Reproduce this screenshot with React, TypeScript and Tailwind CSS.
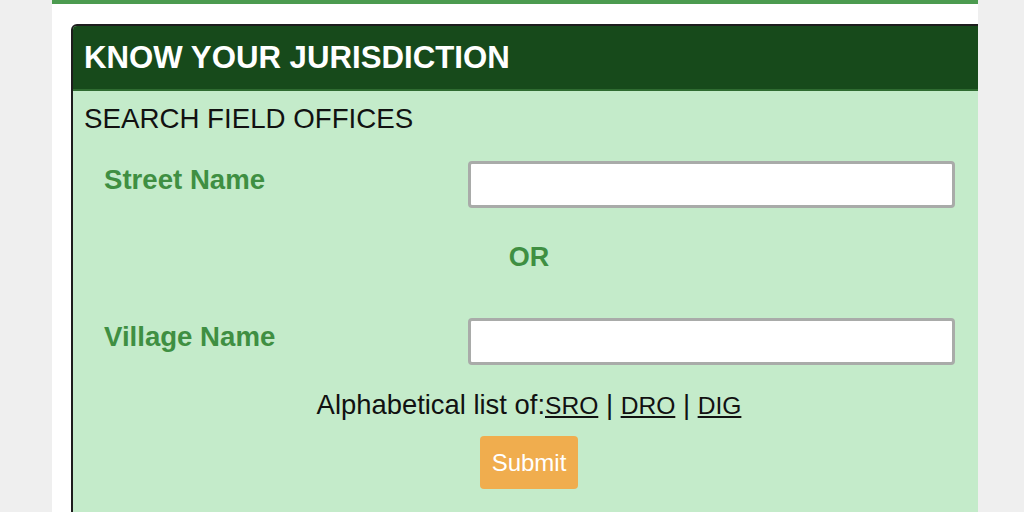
import React from 'react'

const sans = { fontFamily: '"Liberation Sans", Arial, sans-serif' }

function FieldRow({ label }: { label: string }) {
  return (
    <div className="flex items-start pl-[31px]">
      <label className="w-[364px] pt-[3px] text-[27.6px] leading-[31px] font-bold text-[#3f8f42]">{label}</label>
      <input
        type="text"
        className="w-[487px] h-[47px] bg-white border-[3px] border-[#a9aba9] rounded-[4px] outline-none"
      />
    </div>
  )
}

export default function App() {
  return (
    <div className="w-[1024px] h-[512px] bg-[#efefef] overflow-hidden" style={sans}>
      <div className="ml-[52px] w-[926px] h-[512px] bg-white overflow-hidden">
        <div className="h-[4px] bg-[#4c9b50]" />
        <div className="ml-[19px] mt-[20px] w-[916px] h-[600px] border-2 border-[#1d1d1d] rounded-tl-[6px] overflow-hidden bg-[#c4ebca]">
          <div className="h-[65px] bg-[#174a1b] border-b-2 border-[#2f6b31] flex items-center pl-[11px]">
            <h1 className="text-[31.2px] font-bold text-white leading-none">KNOW YOUR JURISDICTION</h1>
          </div>
          <div className="pt-[12px]">
            <p className="pl-[11px] text-[27.7px] leading-[32px] text-[#111]">SEARCH FIELD OFFICES</p>
            <div className="mt-[26px]">
              <FieldRow label="Street Name" />
            </div>
            <p className="mt-[34px] text-center text-[27px] leading-[31px] font-bold text-[#3f8f42]">OR</p>
            <div className="mt-[45px]">
              <FieldRow label="Village Name" />
            </div>
            <p className="mt-[24px] text-center text-[27.4px] leading-[31px] text-[#111]">
              Alphabetical list of:<a href="#" className="underline text-[#111] text-[24.6px]">SRO</a> | <a href="#" className="underline text-[#111] text-[24.6px]">DRO</a> | <a href="#" className="underline text-[#111] text-[24.6px]">DIG</a>
            </p>
            <div className="mt-[15px] flex justify-center">
              <button className="w-[98px] h-[53px] bg-[#f0ad4e] text-white text-[24px] rounded-[4px]">Submit</button>
            </div>
          </div>
        </div>
      </div>
    </div>
  )
}
